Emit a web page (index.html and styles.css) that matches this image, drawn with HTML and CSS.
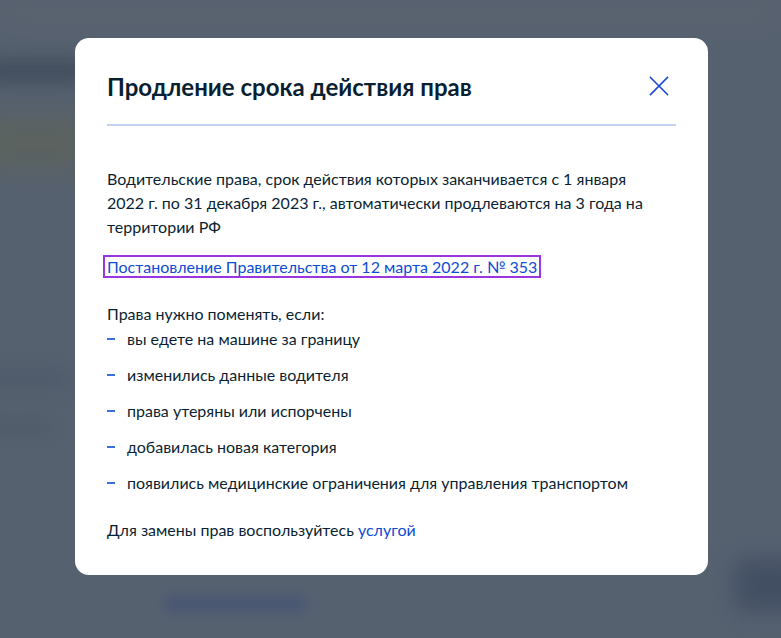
FILE: index.html
```html
<!DOCTYPE html>
<html lang="ru">
<head>
<meta charset="utf-8">
<title>Продление срока действия прав</title>
<link rel="stylesheet" href="styles.css">
</head>
<body>
<div class="backdrop" aria-hidden="true">
  <div class="blob blob-a"></div>
  <div class="blob blob-b"></div>
  <div class="blob blob-c"></div>
  <div class="blob blob-d"></div>
  <div class="blob blob-e"></div>
  <div class="blob blob-f"></div>
  <div class="blob blob-g"></div>
</div>
<div class="overlay">
  <div class="modal" role="dialog">
    <div class="modal-head">
      <h2 class="modal-title">Продление срока действия прав</h2>
      <button class="close" type="button" aria-label="Закрыть">
        <svg width="24" height="24" viewBox="0 0 24 24"><path d="M3.5 2.5 L20.5 19.5 M20.5 2.5 L3.5 19.5" stroke="#1d47d4" stroke-width="1.6" fill="none" stroke-linecap="square"/></svg>
      </button>
    </div>
    <div class="divider"></div>
    <p class="text intro">Водительские права, срок действия которых заканчивается с 1 января 2022 г. по 31 декабря 2023 г., автоматически продлеваются на 3 года на территории РФ</p>
    <p class="link-row"><a class="link focused" href="#">Постановление Правительства от 12 марта 2022 г. № 353</a></p>
    <p class="text list-title">Права нужно поменять, если:</p>
    <ul class="list">
      <li>вы едете на машине за границу</li>
      <li>изменились данные водителя</li>
      <li>права утеряны или испорчены</li>
      <li>добавилась новая категория</li>
      <li>появились медицинские ограничения для управления транспортом</li>
    </ul>
    <p class="text final">Для замены прав воспользуйтесь <a class="link" href="#">услугой</a></p>
  </div>
</div>
</body>
</html>
```

FILE: styles.css
```css
* { box-sizing: border-box; }
html, body { margin: 0; padding: 0; }
body {
  width: 781px;
  height: 638px;
  overflow: hidden;
  background: #566170;
  font-family: Lato, "Noto Sans", sans-serif;
  color: #0b1f33;
  position: relative;
}
.backdrop {
  position: absolute;
  inset: 0;
  overflow: hidden;
}
.blob {
  position: absolute;
  filter: blur(10px);
}
.blob-a { left: -20px; top: 62px; width: 110px; height: 18px; background: #3d4858; }
.blob-b { left: -20px; top: 115px; width: 110px; height: 55px; background: #5b625f; filter: blur(14px); }
.blob-c { left: -20px; top: 372px; width: 90px; height: 12px; background: #4c5767; }
.blob-d { left: -20px; top: 420px; width: 70px; height: 14px; background: #4f5a68; }
.blob-e { left: 165px; top: 596px; width: 140px; height: 16px; background: #495673; filter: blur(6px); }
.blob-f { left: 735px; top: 560px; width: 70px; height: 50px; background: #414e62; filter: blur(12px); }
.blob-g { left: 0; top: 0; width: 781px; height: 30px; background: #59626e; filter: blur(12px); }
.overlay {
  position: relative;
  display: flex;
  justify-content: center;
  padding: 38px 0 0 2px;
}
.modal {
  width: 633px;
  background: #ffffff;
  border-radius: 14px;
  padding: 32px 32px 33px;
}
.modal-head {
  display: flex;
  align-items: center;
  justify-content: space-between;
}
.modal-title {
  margin: 0;
  font-size: 24px;
  line-height: 34px;
  font-weight: 700;
  color: #0b1f33;
}
.close {
  border: 0;
  background: none;
  padding: 0;
  margin-right: 5px;
  width: 24px;
  height: 24px;
  display: flex;
  cursor: pointer;
}
.divider {
  height: 2px;
  background: #c3d3f0;
  margin: 20px 0 41px;
}
.text {
  margin: 0;
  font-size: 16px;
  line-height: 24px;
}
.intro {
  max-width: 540px;
}
.link-row {
  margin: 16px 0 0;
  font-size: 16px;
  line-height: 24px;
}
.link {
  color: #0d4cd3;
  text-decoration: none;
}
.focused {
  outline: 2px solid #9a35e0;
  outline-offset: 0;
  padding: 0 2px;
  margin-left: -2px;
}
.list-title {
  margin-top: 23px;
}
.list {
  list-style: none;
  margin: 1px 0 0;
  padding: 0;
  display: flex;
  flex-direction: column;
  gap: 12px;
}
.list li {
  position: relative;
  padding-left: 20px;
  font-size: 16px;
  line-height: 24px;
}
.list li::before {
  content: "";
  position: absolute;
  left: 0;
  top: 11px;
  width: 8px;
  height: 2px;
  background: #3e6fdc;
}
.final {
  margin-top: 23px;
}
```
